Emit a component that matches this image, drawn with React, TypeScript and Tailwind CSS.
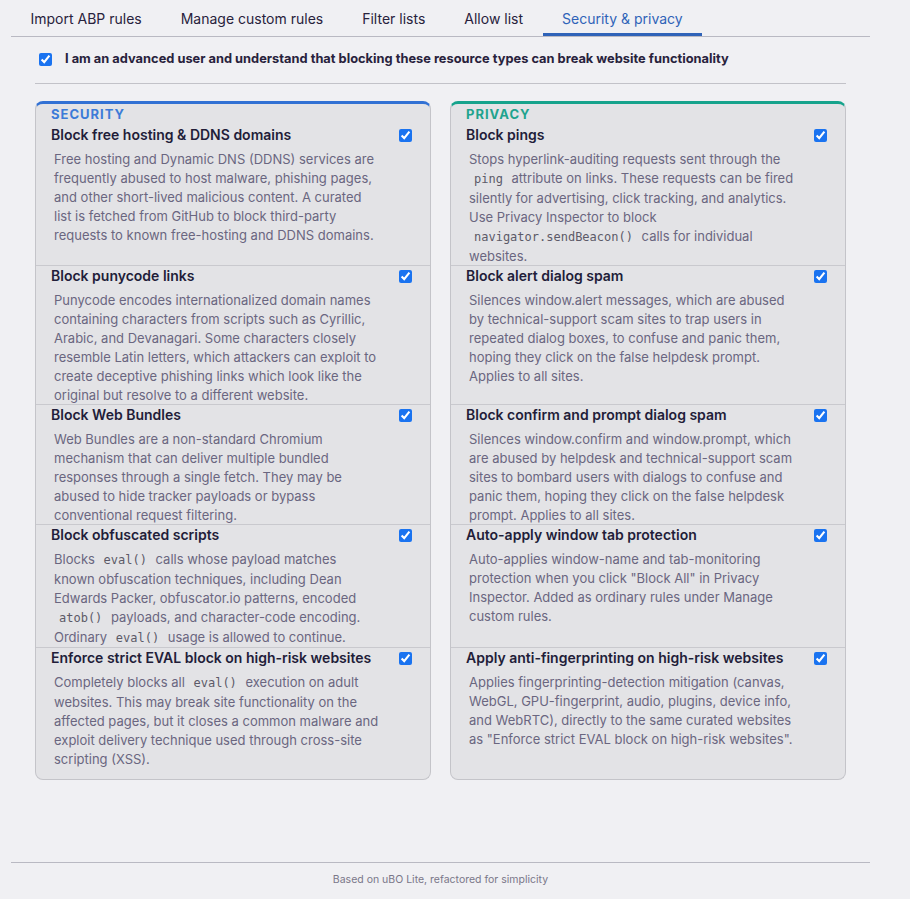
import React from "react";

type Part = string | { code: string };
type Item = { title: string; body: Part[] };

const security: Item[] = [
  {
    title: "Block free hosting & DDNS domains",
    body: [
      "Free hosting and Dynamic DNS (DDNS) services are frequently abused to host malware, phishing pages, and other short-lived malicious content. A curated list is fetched from GitHub to block third-party requests to known free-hosting and DDNS domains.",
    ],
  },
  {
    title: "Block punycode links",
    body: [
      "Punycode encodes internationalized domain names containing characters from scripts such as Cyrillic, Arabic, and Devanagari. Some characters closely resemble Latin letters, which attackers can exploit to create deceptive phishing links which look like the original but resolve to a different website.",
    ],
  },
  {
    title: "Block Web Bundles",
    body: [
      "Web Bundles are a non-standard Chromium mechanism that can deliver multiple bundled responses through a single fetch. They may be abused to hide tracker payloads or bypass conventional request filtering.",
    ],
  },
  {
    title: "Block obfuscated scripts",
    body: [
      "Blocks ",
      { code: "eval()" },
      " calls whose payload matches known obfuscation techniques, including Dean Edwards Packer, obfuscator.io patterns, encoded ",
      { code: "atob()" },
      " payloads, and character-code encoding. Ordinary ",
      { code: "eval()" },
      " usage is allowed to continue.",
    ],
  },
  {
    title: "Enforce strict EVAL block on high-risk websites",
    body: [
      "Completely blocks all ",
      { code: "eval()" },
      " execution on adult websites. This may break site functionality on the affected pages, but it closes a common malware and exploit delivery technique used through cross-site scripting (XSS).",
    ],
  },
];

const privacy: Item[] = [
  {
    title: "Block pings",
    body: [
      "Stops hyperlink-auditing requests sent through the ",
      { code: "ping" },
      " attribute on links. These requests can be fired silently for advertising, click tracking, and analytics. Use Privacy Inspector to block ",
      { code: "navigator.sendBeacon()" },
      " calls for individual websites.",
    ],
  },
  {
    title: "Block alert dialog spam",
    body: [
      "Silences window.alert messages, which are abused by technical-support scam sites to trap users in repeated dialog boxes, to confuse and panic them, hoping they click on the false helpdesk prompt. Applies to all sites.",
    ],
  },
  {
    title: "Block confirm and prompt dialog spam",
    body: [
      "Silences window.confirm and window.prompt, which are abused by helpdesk and technical-support scam sites to bombard users with dialogs to confuse and panic them, hoping they click on the false helpdesk prompt. Applies to all sites.",
    ],
  },
  {
    title: "Auto-apply window tab protection",
    body: [
      'Auto-applies window-name and tab-monitoring protection when you click "Block All" in Privacy Inspector. Added as ordinary rules under Manage custom rules.',
    ],
  },
  {
    title: "Apply anti-fingerprinting on high-risk websites",
    body: [
      'Applies fingerprinting-detection mitigation (canvas, WebGL, GPU-fingerprint, audio, plugins, device info, and WebRTC), directly to the same curated websites as "Enforce strict EVAL block on high-risk websites".',
    ],
  },
];

const tabs = [
  "Import ABP rules",
  "Manage custom rules",
  "Filter lists",
  "Allow list",
  "Security & privacy",
];

function Body({ parts }: { parts: Part[] }) {
  return (
    <p className="mt-[5px] -mb-[1px] w-[328px] pl-[3px] text-[13px] leading-[19px] text-[#6a6680]">
      {parts.map((p, i) =>
        typeof p === "string" ? (
          <React.Fragment key={i}>{p}</React.Fragment>
        ) : (
          <code
            key={i}
            className="px-[5px] text-[12px] text-[#5c5a68] [font-family:'DejaVu_Sans_Mono',monospace]"
          >
            {p.code}
          </code>
        )
      )}
    </p>
  );
}

function Card({
  heading,
  items,
  accent,
}: {
  heading: string;
  items: Item[];
  accent: "blue" | "teal";
}) {
  const top =
    accent === "blue" ? "border-t-[#3271d4]" : "border-t-[#16a38c]";
  const headColor = accent === "blue" ? "text-[#3c7bd8]" : "text-[#1fa38e]";
  return (
    <section
      className={`row-span-6 grid grid-rows-subgrid gap-0 rounded-[8px] border border-[#c4c4c9] border-t-[3px] ${top} bg-[#e3e3e6] pb-[11px]`}
    >
      <h2
        className={`pl-[15px] pt-[3px] pb-[4px] text-[13px] font-bold uppercase leading-[14px] tracking-[1px] ${headColor}`}
      >
        {heading}
      </h2>
      {items.map((it, i) => (
        <div
          key={it.title}
          className={`pl-[15px] pr-[18px] ${i > 0 ? "border-t border-[#c9c9ce]" : ""}`}
        >
          <div className="flex items-center justify-between">
            <h3 className="text-[14px] font-semibold leading-[20px] text-[#221d39]">
              {it.title}
            </h3>
            <input
              type="checkbox"
              defaultChecked
              className="h-[13px] w-[13px] shrink-0 accent-[#1a73f0]"
            />
          </div>
          <Body parts={it.body} />
        </div>
      ))}
    </section>
  );
}

export default function App() {
  return (
    <div className="min-h-[899px] w-full bg-[#f0f0f3] [font-family:Inter,'Noto_Sans',sans-serif]">
      <div className="ml-[11px] w-[859px]">
        <nav className="flex border-b border-[#b9b9c2]">
          {tabs.map((t) => {
            const active = t === "Security & privacy";
            return (
              <div
                key={t}
                className={`flex h-[36px] items-center border-b-[3px] px-[19.5px] pt-[3px] text-[14px] ${
                  active
                    ? "border-[#2f63b8] text-[#2f63b8]"
                    : "border-transparent text-[#28223c]"
                }`}
              >
                {t}
              </div>
            );
          })}
        </nav>

        <main className="px-6">
          <label className="flex items-center gap-[13px] pl-1 pt-[12px] pb-[14px]">
            <input
              type="checkbox"
              defaultChecked
              className="h-[13px] w-[13px] accent-[#1a73f0]"
            />
            <span className="text-[12.85px] font-bold leading-[20px] text-[#28223c]">
              I am an advanced user and understand that blocking these resource
              types can break website functionality
            </span>
          </label>
          <div className="border-t border-[#c2c2c8]" />

          <div className="mt-[17px] grid grid-cols-2 gap-x-[19px] gap-y-0">
            <Card heading="Security" items={security} accent="blue" />
            <Card heading="Privacy" items={privacy} accent="teal" />
          </div>
        </main>

        <footer className="mt-[82px] border-t border-[#b9b9c2] pt-[9px] pb-[10px] text-center text-[10.5px] leading-[16px] text-[#7a7789]">
          Based on uBO Lite, refactored for simplicity
        </footer>
      </div>
    </div>
  );
}
